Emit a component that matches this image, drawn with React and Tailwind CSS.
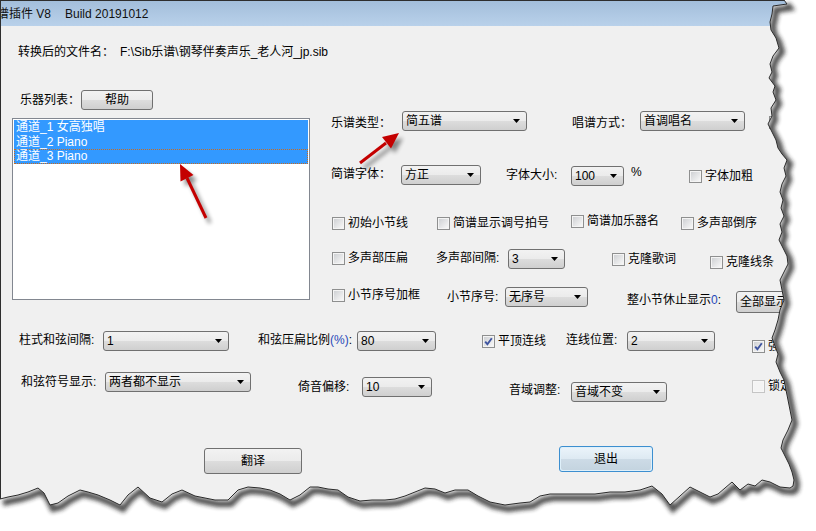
import React from 'react';

const Text = ({ children, className = '' }) => (
  <span className={`block whitespace-nowrap text-[12px] leading-[16px] text-black ${className}`}>{children}</span>
);

const Combo = ({ value, className = '' }) => (
  <div className={`flex items-center h-[20px] border border-[#707070] rounded-[3px] bg-[linear-gradient(#f2f2f2,#ebebeb_50%,#dddddd_50%,#cfcfcf)] ${className}`}>
    <span className="flex-1 pl-[3px] text-[12px] leading-[16px] whitespace-nowrap overflow-hidden">{value}</span>
    <svg width="7" height="4" className="mr-[6px] shrink-0">
      <path d="M0 0h7L3.5 4z" fill="#000" />
    </svg>
  </div>
);

const Button = ({ children, className = '' }) => (
  <div className={`flex items-center justify-center border border-[#707070] rounded-[3px] bg-[linear-gradient(#f2f2f2,#ebebeb_50%,#dddddd_50%,#cfcfcf)] text-[12px] whitespace-nowrap overflow-hidden ${className}`}>
    {children}
  </div>
);

const Check = ({ checked, disabled }) => (
  <span
    className={`flex shrink-0 items-center justify-center w-[13px] h-[13px] border p-[1px] ${
      disabled ? 'border-[#c5c5c5] bg-[#f7f7f7]' : 'border-[#8e8f8f] bg-[#f4f4f4]'
    }`}
  >
    <span
      className={`flex items-center justify-center w-full h-full ${
        disabled ? 'bg-[#f4f4f4]' : 'bg-[linear-gradient(135deg,#cfd1d4,#f7f7f7)]'
      }`}
    >
      {checked && (
        <svg width="9" height="9" viewBox="0 0 9 9">
          <path d="M1.2 4.6L3.4 7.2L7.8 1.2" fill="none" stroke="#3f55a0" strokeWidth="1.9" />
        </svg>
      )}
    </span>
  </span>
);

const CheckItem = ({ label, checked, disabled }) => (
  <div className="flex items-center gap-[3px]">
    <Check checked={checked} disabled={disabled} />
    <Text className={disabled ? 'text-[#a0a0a0]' : ''}>{label}</Text>
  </div>
);

// torn paper edge, right side top->bottom then bottom side right->left
const edge = [
  [784, 0], [787, 4], [773, 6], [772, 14], [770, 22], [771, 30], [776, 38], [779, 48], [773, 56], [770, 64],
  [772, 72], [769, 78], [775, 86], [773, 92], [776, 100], [771, 108], [772, 116], [768, 124], [772, 132],
  [776, 140], [778, 148], [782, 154], [787, 160], [784, 168], [786, 176], [782, 184], [780, 192], [783, 200],
  [781, 208], [784, 216], [780, 224], [782, 232], [779, 240], [783, 248], [787, 256], [788, 264], [784, 272],
  [780, 280], [782, 290], [784, 300], [780, 310], [778, 320], [775, 330], [772, 338], [775, 346], [778, 354],
  [776, 362], [780, 372], [784, 380], [786, 390], [788, 400], [790, 410], [792, 420], [788, 430], [783, 440],
  [781, 448], [785, 456], [789, 464], [792, 472], [794, 480], [793, 486],
  [790, 488], [780, 487], [770, 482], [762, 480], [755, 486], [748, 484], [740, 490], [732, 482], [725, 488],
  [718, 494], [710, 497], [700, 492], [690, 487], [680, 496], [670, 505], [662, 494], [652, 486], [640, 490],
  [625, 492], [610, 492], [595, 494], [580, 494], [565, 494], [550, 494], [540, 496], [530, 502], [520, 503],
  [505, 505], [490, 502], [478, 496], [468, 490], [455, 490], [445, 493], [435, 489], [425, 488], [415, 492],
  [405, 496], [395, 499], [385, 500], [372, 500], [360, 501], [348, 497], [338, 490], [328, 489], [318, 487],
  [310, 487], [300, 495], [290, 500], [280, 494], [270, 490], [260, 488], [248, 487], [238, 490], [228, 500],
  [215, 500], [205, 498], [195, 496], [182, 490], [172, 494], [162, 502], [150, 498], [138, 487], [128, 495],
  [120, 505], [110, 500], [98, 495], [88, 492], [80, 490], [68, 496], [58, 503], [50, 505], [44, 493],
  [38, 488], [28, 492], [18, 495], [8, 497], [0, 499],
];
const edgeLine = edge.map(([x, y], i) => `${i ? 'L' : 'M'}${x} ${y}`).join(' ');
const outside = `${edgeLine} L0 531 L816 531 L816 0 Z`;

const Overlay = () => (
  <svg className="absolute inset-0 pointer-events-none" width="816" height="531">
    <defs>
      <filter id="blur" x="-20%" y="-20%" width="140%" height="140%">
        <feGaussianBlur stdDeviation="2" />
      </filter>
      <clipPath id="out">
        <path d={outside} />
      </clipPath>
    </defs>
    {/* arrow shadows */}
    <g filter="url(#blur)" opacity="0.45" transform="translate(4 5)">
      <line x1="206" y1="218" x2="187" y2="178" stroke="#000" strokeWidth="3" />
      <polygon points="180,164 193,175 181,181" fill="#000" />
      <line x1="360" y1="163" x2="386" y2="143" stroke="#000" strokeWidth="3" />
      <polygon points="399,133 391,148 382,137" fill="#000" />
    </g>
    {/* arrows */}
    <line x1="206" y1="218" x2="187" y2="178" stroke="#c40000" strokeWidth="3" />
    <polygon points="180,164 193.5,175 180.5,181.5" fill="#c40000" />
    <line x1="360" y1="163" x2="386" y2="143" stroke="#c40000" strokeWidth="3" />
    <polygon points="399,133 391,148.5 382,137" fill="#c40000" />
    {/* torn edge */}
    <path d={outside} fill="#fff" />
    <g clipPath="url(#out)">
      <path d={edgeLine} fill="none" stroke="#222" strokeWidth="6" filter="url(#blur)" opacity="0.8" transform="translate(3 4)" />
    </g>
    <path d={edgeLine} fill="none" stroke="#2a2a2a" strokeWidth="1" />
  </svg>
);

export default function App() {
  return (
    <div className="relative w-[816px] h-[531px] overflow-hidden bg-white font-['Liberation_Sans','Noto_Sans_CJK_SC',sans-serif]">
      <div className="flex flex-col w-full h-full border-l border-t border-[#2e2e2e]">
        {/* title bar */}
        <div className="flex items-center h-[25px] shrink-0 overflow-hidden bg-[linear-gradient(#a3bedb,#b9d1ea)] text-[12px] text-[#111]">
          <span className="-ml-[4px] whitespace-nowrap">谱插件 V8</span>
          <span className="ml-[14px] whitespace-nowrap">Build 20191012</span>
        </div>

        {/* client area */}
        <div className="flex-1 flex flex-col bg-[#f0f0f0]">
          <div className="flex mt-[18px] ml-[17px]">
            <Text className="w-[102px]">转换后的文件名：</Text>
            <Text>F:\Sib乐谱\钢琴伴奏声乐_老人河_jp.sib</Text>
          </div>

          <div className="flex mt-[30px]">
            {/* instrument list */}
            <div className="flex flex-col ml-[11px] w-[298px] shrink-0">
              <div className="flex items-center h-[20px] pl-[8px]">
                <Text className="w-[61px]">乐器列表：</Text>
                <Button className="w-[72px] h-[20px]">帮助</Button>
              </div>
              <div className="mt-[8px] h-[182px] border border-[#828790] bg-white p-[1px]">
                <div className="h-[15px] bg-[#3399ff] pl-[2px] text-[12px] leading-[15px] text-white whitespace-nowrap">通道_1 女高独唱</div>
                <div className="h-[14px] bg-[#3399ff] pl-[2px] text-[12px] leading-[14px] text-white whitespace-nowrap">通道_2 Piano</div>
                <div className="h-[15px] bg-[#3399ff] pl-[1px] border border-dotted border-[#c86a1e] text-[12px] leading-[13px] text-white whitespace-nowrap">通道_3 Piano</div>
              </div>
            </div>

            {/* right side options */}
            <div className="flex flex-col ml-[21px] pt-[20px]">
              <div className="flex items-start h-[21px]">
                <div className="w-[71px] mt-[5px]"><Text>乐谱类型：</Text></div>
                <div className="w-[170px] mt-[1px]"><Combo value="简五谱" className="w-[125px]" /></div>
                <div className="w-[68px] mt-[5px]"><Text>唱谱方式：</Text></div>
                <div className="w-[129px] mt-[1px]"><Combo value="首调唱名" className="w-[105px]" /></div>
                <div className="mt-[6px]"><Check /></div>
              </div>

              <div className="flex items-start h-[21px] mt-[34px]">
                <div className="w-[70px] mt-[1px]"><Text>简谱字体：</Text></div>
                <div className="w-[105px]"><Combo value="方正" className="w-[80px]" /></div>
                <div className="w-[65px] mt-[2px]"><Text>字体大小:</Text></div>
                <div className="w-[60px] mt-[1px]"><Combo value="100" className="w-[53px]" /></div>
                <div className="w-[58px] -mt-[1px]"><Text>%</Text></div>
                <div className="mt-[3px]"><CheckItem label="字体加粗" /></div>
              </div>

              <div className="flex items-start h-[16px] mt-[29px] pl-[1px]">
                <div className="w-[105px]"><CheckItem label="初始小节线" /></div>
                <div className="w-[134px]"><CheckItem label="简谱显示调号拍号" /></div>
                <div className="w-[110px] -mt-[2px]"><CheckItem label="简谱加乐器名" /></div>
                <div><CheckItem label="多声部倒序" /></div>
              </div>

              <div className="flex items-start h-[20px] mt-[18px] pl-[1px]">
                <div className="w-[104px] mt-[1px]"><CheckItem label="多声部压扁" /></div>
                <div className="w-[72px] mt-[1px]"><Text>多声部间隔:</Text></div>
                <div className="w-[104px]"><Combo value="3" className="w-[57px]" /></div>
                <div className="w-[98px] mt-[2px]"><CheckItem label="克隆歌词" /></div>
                <div className="mt-[5px]"><CheckItem label="克隆线条" /></div>
              </div>

              <div className="flex items-start h-[26px] mt-[18px] pl-[1px]">
                <div className="w-[115px]"><CheckItem label="小节序号加框" /></div>
                <div className="w-[58px] mt-[2px]"><Text>小节序号:</Text></div>
                <div className="w-[122px]"><Combo value="无序号" className="w-[83px]" /></div>
                <div className="w-[109px] mt-[5px]">
                  <Text>整小节休止显示<span className="text-[#2848b8]">0</span>:</Text>
                </div>
                <div className="mt-[4px]"><Button className="w-[70px] h-[22px] justify-start pl-[3px]">全部显示</Button></div>
              </div>
            </div>
          </div>

          <div className="flex items-start h-[20px] mt-[18px] ml-[18px]">
            <div className="w-[84px] mt-[1px]"><Text>柱式和弦间隔:</Text></div>
            <div className="w-[155px]"><Combo value="1" className="w-[126px]" /></div>
            <div className="w-[99px] mt-[1px]">
              <Text>和弦压扁比例<span className="text-[#2848b8]">(%)</span>:</Text>
            </div>
            <div className="w-[125px]"><Combo value="80" className="w-[79px]" /></div>
            <div className="w-[84px] mt-[2px]"><CheckItem label="平顶连线" checked /></div>
            <div className="w-[61px] mt-[1px]"><Text>连线位置:</Text></div>
            <div className="w-[125px]"><Combo value="2" className="w-[88px]" /></div>
            <div className="mt-[7px]"><CheckItem label="强制" checked /></div>
          </div>

          <div className="flex items-start h-[30px] mt-[21px] ml-[20px]">
            <div className="w-[84px] mt-[2px]"><Text>和弦符号显示:</Text></div>
            <div className="w-[193px]"><Combo value="两者都不显示" className="w-[146px]" /></div>
            <div className="w-[64px] mt-[7px]"><Text>倚音偏移:</Text></div>
            <div className="w-[147px] mt-[5px]"><Combo value="10" className="w-[70px]" /></div>
            <div className="w-[62px] mt-[10px]"><Text>音域调整:</Text></div>
            <div className="w-[181px] mt-[10px]"><Combo value="音域不变" className="w-[96px]" /></div>
            <div className="mt-[6px]"><CheckItem label="锁定" disabled /></div>
          </div>

          <div className="flex items-start mt-[44px] ml-[203px]">
            <div className="w-[355px] mt-[2px]"><Button className="w-[98px] h-[26px]">翻译</Button></div>
            <div className="rounded-[3px] border border-[#3c8fd0] p-[1px] bg-[#dff0fa]">
              <div className="flex items-center justify-center w-[90px] h-[22px] rounded-[2px] bg-[linear-gradient(#eaf3fa,#dde9f2_50%,#cddbe6_50%,#c4d4e0)] text-[12px]">退出</div>
            </div>
          </div>
        </div>
      </div>
      <Overlay />
    </div>
  );
}
